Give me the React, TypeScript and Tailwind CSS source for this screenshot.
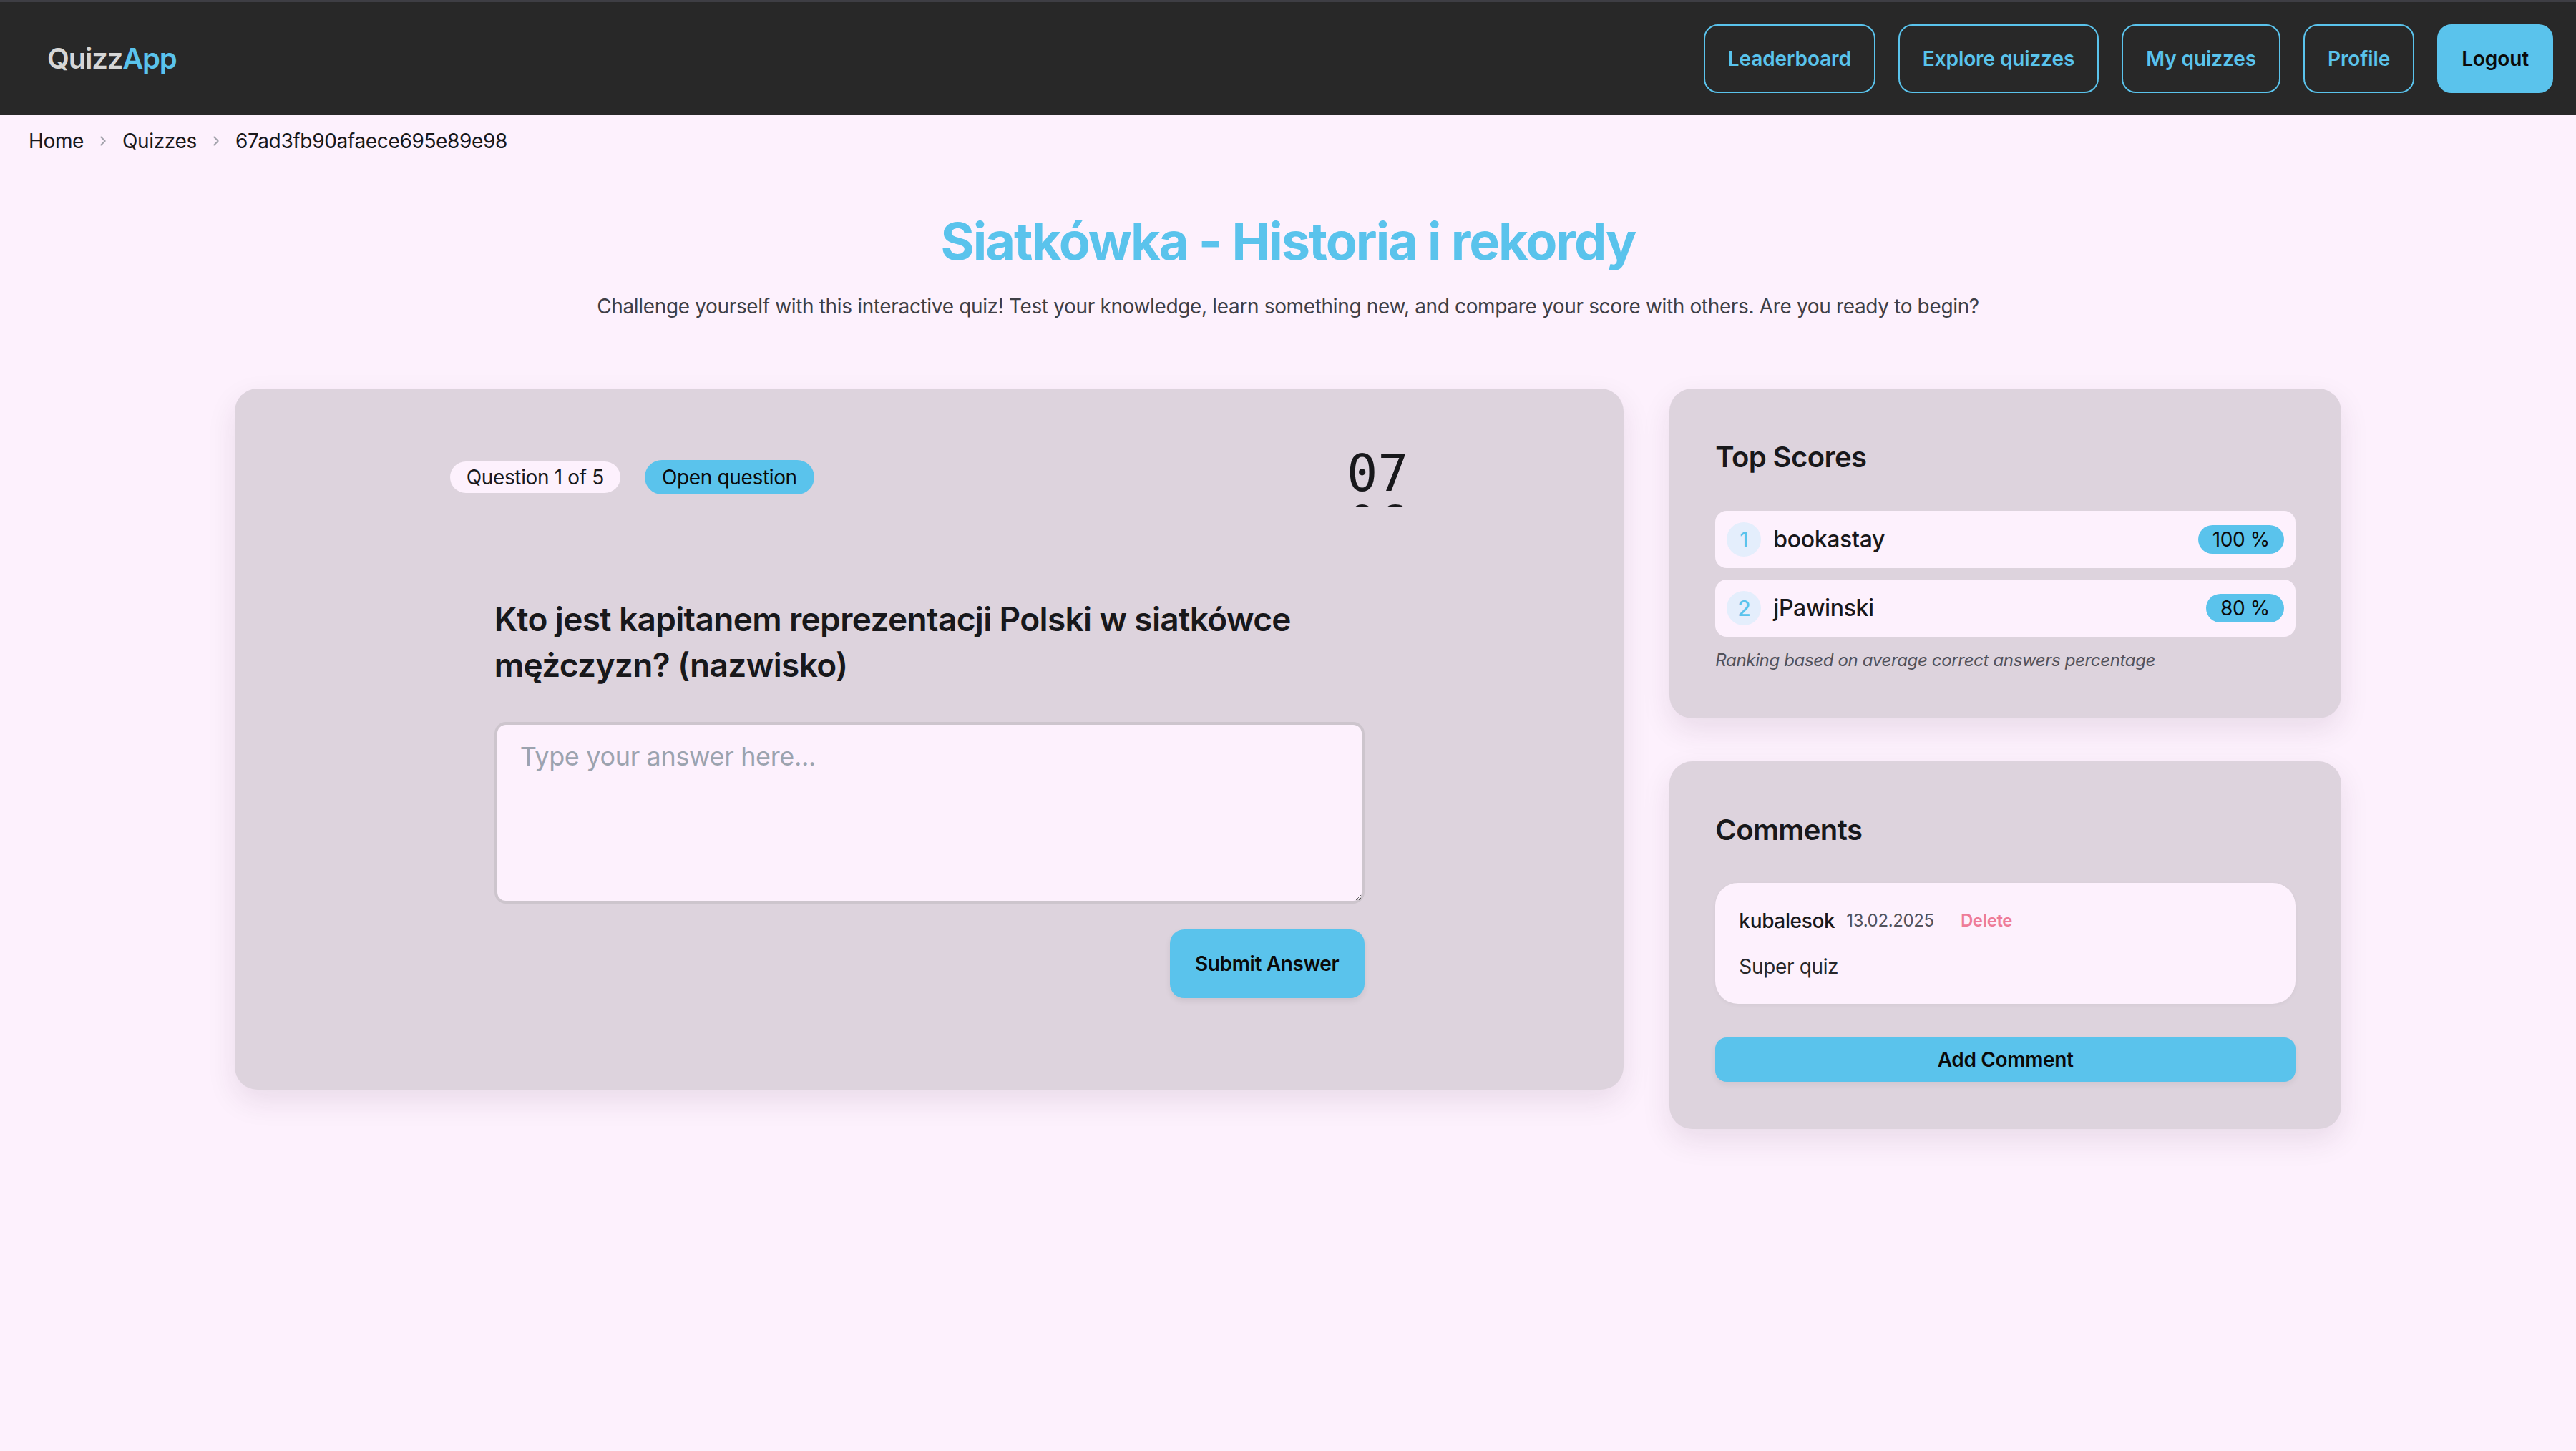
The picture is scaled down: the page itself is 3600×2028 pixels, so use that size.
import React from "react";
import { ChevronRight } from "lucide-react";

const navButtons = ["Leaderboard", "Explore quizzes", "My quizzes", "Profile"];

function Navbar() {
  return (
    <nav className="flex h-[161px] items-center justify-between border-t-[3px] border-[#3e3e44] bg-[#282828] pl-[66px] pr-[32px]">
      <div className="text-[40px] font-semibold leading-none tracking-[-1.2px]">
        <span className="text-[#d6d6d6]">Quizz</span>
        <span className="text-[#5ac3ec]">App</span>
      </div>
      <div className="flex items-center gap-[32px] tracking-[-0.1px]">
        {navButtons.map((b) => (
          <button
            key={b}
            className="flex h-[96px] items-center rounded-[20px] border-2 border-[#5ac3ec] px-[32px] text-[28px] font-semibold text-[#5ac3ec]"
          >
            {b}
          </button>
        ))}
        <button className="flex h-[96px] items-center rounded-[20px] border-2 border-[#5ac3ec] bg-[#5ac3ec] px-[32px] text-[28px] font-semibold text-[#0a0a0a]">
          Logout
        </button>
      </div>
    </nav>
  );
}

function Breadcrumb() {
  return (
    <div className="flex items-center gap-[16px] px-[40px] py-[16px] text-[28px] leading-[40px] text-[#18181b]">
      <span>Home</span>
      <ChevronRight size={22} strokeWidth={2} className="text-[#a1a1aa]" />
      <span>Quizzes</span>
      <ChevronRight size={22} strokeWidth={2} className="text-[#a1a1aa]" />
      <span>67ad3fb90afaece695e89e98</span>
    </div>
  );
}

function QuizCard() {
  return (
    <div className="col-span-2 self-start rounded-[32px] bg-[#ddd3dd] p-[64px] shadow-[0_16px_40px_rgba(60,30,60,0.10)]">
      <div className="mx-auto w-[1340px]">
        <div className="mt-[18px] flex items-center justify-between">
          <div className="flex items-center gap-[34px]">
            <span className="flex h-[44px] items-center rounded-full bg-[#fdf1fd] px-[23px] text-[28px] leading-none text-[#18181b]">
              Question 1 of 5
            </span>
            <span className="flex h-[48px] items-center rounded-full bg-[#5ac3ec] px-[24px] text-[28px] leading-none text-[#0a0a0a]">
              Open question
            </span>
          </div>
          <div className="h-[84px] overflow-hidden font-['DejaVu_Sans_Mono',monospace] text-[72px] leading-[72px] tracking-normal text-[#18181b]">
            <div>07</div>
            <div>06</div>
          </div>
        </div>
        <div className="px-[62px]">
          <h2 className="mt-[124px] text-[46px] font-semibold leading-[64px] tracking-[-0.65px] text-[#18181b]">
            Kto jest kapitanem reprezentacji Polski w siatkówce mężczyzn? (nazwisko)
          </h2>
          <textarea
            placeholder="Type your answer here..."
            className="mt-[48px] block h-[254px] w-full rounded-[16px] border-4 border-[#cdc5cd] bg-[#fdf1fd] px-[32px] py-[16px] text-[36px] leading-[56px] text-[#18181b] outline-none placeholder:text-[#9ca3af]"
          />
          <div className="mt-[36px] flex justify-end">
            <button className="h-[96px] w-[272px] rounded-[20px] bg-[#5ac3ec] text-[28px] font-semibold text-[#0a0a0a] shadow-[0_4px_8px_rgba(0,0,0,0.08)]">
              Submit Answer
            </button>
          </div>
          <div className="h-[64px]" />
        </div>
      </div>
    </div>
  );
}

const scores = [
  { rank: 1, name: "bookastay", pct: "100 %" },
  { rank: 2, name: "jPawinski", pct: "80 %" },
];

function TopScores() {
  return (
    <div className="rounded-[32px] bg-[#ddd3dd] px-[64px] pb-[65px] pt-[68px] shadow-[0_16px_40px_rgba(60,30,60,0.10)]">
      <h3 className="text-[40px] font-semibold leading-[56px] tracking-[-0.6px] text-[#18181b]">Top Scores</h3>
      <div className="mt-[47px] flex flex-col gap-[16px]">
        {scores.map((s) => (
          <div key={s.rank} className="flex h-[80px] items-center justify-between rounded-[16px] bg-[#fdf1fd] px-[16px]">
            <div className="flex items-center gap-[17px]">
              <span className="flex h-[48px] w-[48px] items-center justify-center rounded-full bg-[#e4eefc] text-[30px] font-medium text-[#5ac3ec]">
                {s.rank}
              </span>
              <span className="text-[32px] font-medium text-[#18181b]">{s.name}</span>
            </div>
            <span className="flex h-[40px] items-center rounded-full bg-[#5ac3ec] px-[20px] text-[28px] text-[#0a0a0a]">
              {s.pct}
            </span>
          </div>
        ))}
      </div>
      <p className="mt-[17px] text-[24px] italic leading-[32px] text-[#52525b]">
        Ranking based on average correct answers percentage
      </p>
    </div>
  );
}

function Comments() {
  return (
    <div className="rounded-[32px] bg-[#ddd3dd] px-[64px] pb-[66px] pt-[68px] shadow-[0_16px_40px_rgba(60,30,60,0.10)]">
      <h3 className="text-[40px] font-semibold leading-[56px] tracking-[-0.6px] text-[#18181b]">Comments</h3>
      <div className="mt-[46px] rounded-[32px] bg-[#fdf1fd] px-[33px] pb-[32px] pt-[33px] shadow-[0_2px_6px_rgba(0,0,0,0.04)]">
        <div className="flex h-[40px] items-center">
          <span className="text-[28px] font-medium text-[#18181b]">kubalesok</span>
          <span className="ml-[16px] text-[24px] text-[#52525b]">13.02.2025</span>
          <span className="ml-[37px] text-[24px] font-semibold text-[#ee7c98]">Delete</span>
        </div>
        <p className="mt-[24px] text-[28px] leading-[40px] text-[#27272a]">Super quiz</p>
      </div>
      <button className="mt-[47px] h-[62px] w-full rounded-[16px] bg-[#5ac3ec] text-[28px] font-semibold text-[#0a0a0a] shadow-[0_4px_8px_rgba(0,0,0,0.06)]">
        Add Comment
      </button>
    </div>
  );
}

export default function App() {
  return (
    <div className="min-h-[2028px] w-full bg-[#fdf1fd] font-['Inter',sans-serif] tracking-[-0.35px]">
      <Navbar />
      <Breadcrumb />
      <h1 className="mt-[64px] text-center text-[72px] font-bold leading-[80px] tracking-[-2px] text-[#5ac3ec]">
        Siatkówka - Historia i rekordy
      </h1>
      <p className="mt-[31px] text-center text-[28px] leading-[40px] text-[#3f3f46]">
        Challenge yourself with this interactive quiz! Test your knowledge, learn something new, and compare your score with others. Are you ready to begin?
      </p>
      <div className="mx-auto mt-[95px] grid w-[2944px] grid-cols-3 items-start gap-[64px]">
        <QuizCard />
        <div className="flex flex-col gap-[60px]">
          <TopScores />
          <Comments />
        </div>
      </div>
    </div>
  );
}
